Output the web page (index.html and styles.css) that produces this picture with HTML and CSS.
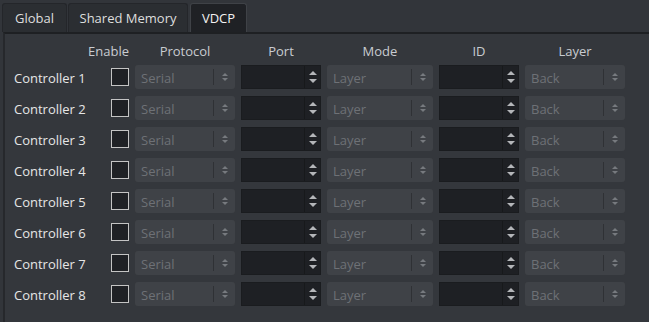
FILE: index.html
```html
<!DOCTYPE html>
<html lang="en">
<head>
  <meta charset="UTF-8">
  <title>VDCP</title>
  <link rel="stylesheet" href="styles.css">
</head>
<body>
  <div class="tabbar">
    <div class="tab tab-global">Global</div>
    <div class="tab tab-shm">Shared Memory</div>
    <div class="tab tab-vdcp active">VDCP</div>
  </div>

  <div class="panel">
    <div class="row head">
      <span class="h-enable">Enable</span>
      <span class="w-combo">Protocol</span>
      <span class="w-spin">Port</span>
      <span class="w-mode">Mode</span>
      <span class="w-spin">ID</span>
      <span class="w-combo">Layer</span>
    </div>

    <div class="rows" id="rows"></div>
  </div>

  <template id="row-tpl">
    <div class="row">
      <span class="label">Controller 1</span>
      <span class="check"></span>
      <div class="combo w-combo"><span class="val">Serial</span><span class="sep"></span><span class="carets"><i class="up"></i><i class="down"></i></span></div>
      <div class="spin w-spin"><span class="arrows"><i class="up"></i><i class="down"></i></span></div>
      <div class="combo w-mode"><span class="val">Layer</span><span class="sep"></span><span class="carets"><i class="up"></i><i class="down"></i></span></div>
      <div class="spin w-spin"><span class="arrows"><i class="up"></i><i class="down"></i></span></div>
      <div class="combo w-combo"><span class="val">Back</span><span class="sep"></span><span class="carets"><i class="up"></i><i class="down"></i></span></div>
    </div>
  </template>

  <script>
    // 8 controller rows
    const rows = document.getElementById('rows');
    const tpl = document.getElementById('row-tpl');
    for (let i = 1; i <= 8; i++) {
      const row = tpl.content.cloneNode(true);
      row.querySelector('.label').textContent = 'Controller ' + i;
      rows.appendChild(row);
    }
  </script>
</body>
</html>
```

FILE: styles.css
```css
html, body {
  margin: 0;
  height: 100%;
}

body {
  font-family: "Open Sans", "Noto Sans", sans-serif;
  font-size: 13px;
  background-color: #32353a;
  color: #e4e4e4;
  display: flex;
  flex-direction: column;
  overflow: hidden;
}

/* tabs */
.tabbar {
  display: flex;
  align-items: flex-end;
  height: 32px;
  padding-left: 2px;
  box-sizing: border-box;
}

.tab {
  box-sizing: border-box;
  height: 29px;
  line-height: 28px;
  text-align: center;
  background-color: #2b2e32;
  border: 1px solid #24262a;
  border-bottom: none;
  border-radius: 3px 3px 0 0;
  color: #dedede;
}

.tab-global { width: 65px; margin-right: 1px; }
.tab-shm { width: 120px; margin-right: 2px; }
.tab-vdcp { width: 57px; }

.tab.active {
  background-color: #1f2125;
  border-color: #3f4247;
  color: #f2f2f2;
}

/* panel */
.panel {
  flex: 1;
  margin-left: 3px;
  border-left: 2px solid #26282c;
  border-top: 2px solid #1e2023;
  background-color: #34373c;
  padding-left: 9px;
}

.row {
  display: flex;
  align-items: center;
  gap: 6px;
  height: 24px;
}

.head {
  margin-top: 3px;
  padding-top: 2px;
  color: #c9ccd1;
}

.head span {
  text-align: center;
}

.h-enable {
  width: 115px;
  text-align: right !important;
}

.rows {
  display: flex;
  flex-direction: column;
  gap: 7px;
  margin-top: 2px;
}

.label {
  width: 91px;
  padding-top: 2px;
  color: #e6e6e6;
}

.check {
  box-sizing: border-box;
  width: 18px;
  height: 18px;
  border: 1px solid #c4c4c4;
  background-color: #1f2125;
}

.w-combo { width: 100px; }
.w-spin { width: 80px; }
.w-mode { width: 106px; }

/* combo boxes */
.combo {
  box-sizing: border-box;
  height: 24px;
  display: flex;
  align-items: center;
  background-color: #3f4247;
  border-radius: 3px;
  color: #6e7176;
}

.combo .val {
  flex: 1;
  padding-left: 6px;
  padding-top: 2px;
}

.combo .sep {
  width: 1px;
  height: 16px;
  background-color: #2f3135;
}

.combo .carets {
  width: 21px;
  display: flex;
  flex-direction: column;
  align-items: center;
  gap: 2px;
}

.carets i,
.arrows i {
  display: block;
  width: 0;
  height: 0;
  border-left: 3px solid transparent;
  border-right: 3px solid transparent;
}

.carets .up { border-bottom: 3px solid #777a7f; }
.carets .down { border-top: 3px solid #777a7f; }

/* spin boxes */
.spin {
  box-sizing: border-box;
  height: 24px;
  display: flex;
  justify-content: flex-end;
  background-color: #1e2024;
  border: 1px solid #1a1c1f;
}

.spin .arrows {
  width: 15px;
  border-left: 1px solid #17191b;
  display: flex;
  flex-direction: column;
  align-items: center;
  justify-content: center;
  gap: 4px;
}

.arrows i {
  border-left-width: 4px;
  border-right-width: 4px;
}

.arrows .up { border-bottom: 4px solid #b4b6b9; }
.arrows .down { border-top: 4px solid #b4b6b9; }
```
